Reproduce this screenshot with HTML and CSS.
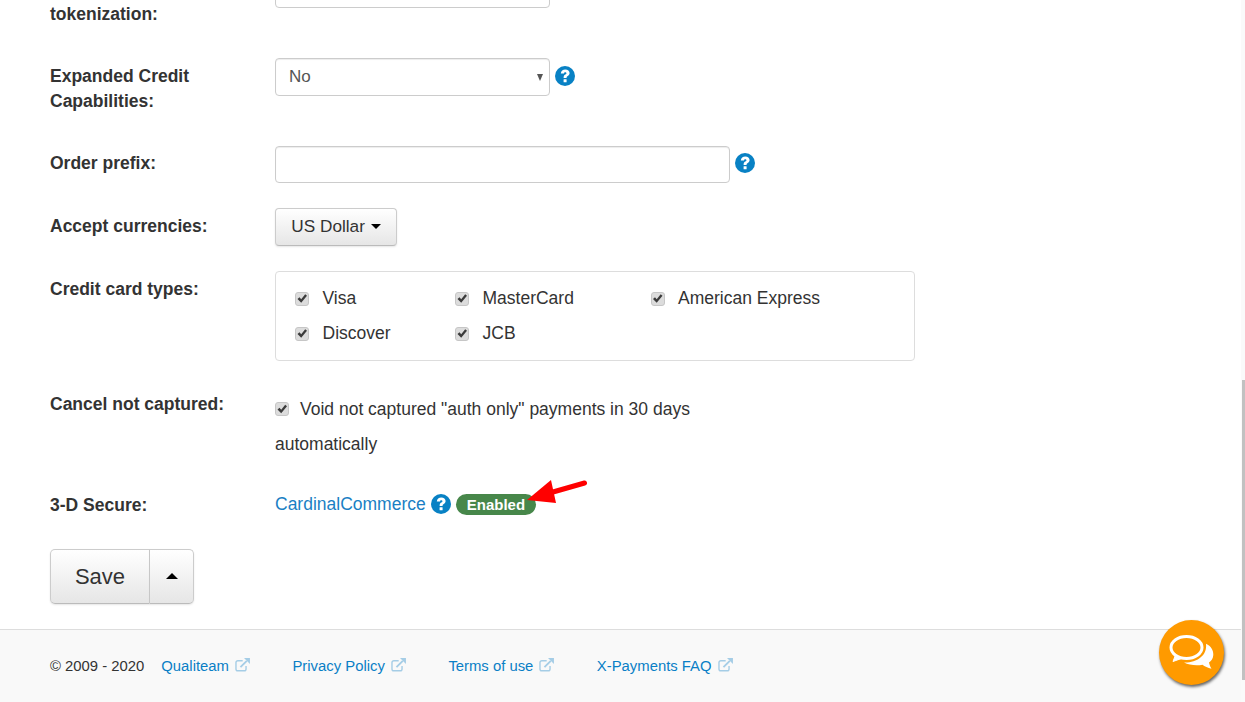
FILE: index.html
```html
<!DOCTYPE html>
<html lang="en">
<head>
<meta charset="utf-8">
<title>X-Payments settings</title>
<link rel="stylesheet" href="styles.css">
</head>
<body>
<svg class="sprite" width="0" height="0" aria-hidden="true">
  <symbol id="help" viewBox="0 0 20 20">
    <circle cx="10" cy="10" r="10" fill="#0881c4"/>
    <path d="M5.800 7.500C6 4.900 7.800 3.400 10.300 3.400c2.500 0 4.300 1.500 4.300 3.600 0 1.500-.8 2.400-1.900 3.100-.9.6-1.100.9-1.100 1.800H8.600c0-1.700.5-2.500 1.700-3.300.8-.5 1.100-.8 1.100-1.400 0-.6-.5-1-1.100-1-.8 0-1.200.5-1.300 1.400z" fill="#fff"/>
    <rect x="8.600" y="13.200" width="3" height="3" rx=".3" fill="#fff"/>
  </symbol>
  <symbol id="ext" viewBox="0 0 16 15">
    <path d="M11.800 8.600v3.100a2 2 0 0 1-2 2H3a2 2 0 0 1-2-2V4.900a2 2 0 0 1 2-2h5.200" fill="none" stroke="currentColor" stroke-width="1.500"/>
    <path d="M5.800 9.800 12.600 3" fill="none" stroke="currentColor" stroke-width="2"/>
    <path d="M9.600 0H16v6.400z" fill="currentColor"/>
  </symbol>
</svg>

<div class="page">
  <main class="form">
    <div class="row row-first">
      <div class="label label-tail">tokenization:</div>
      <div class="field"><span class="select-wrap"><select class="select" aria-label="Tokenization"><option>No</option></select></span></div>
    </div>

    <div class="row row-select">
      <div class="label">Expanded Credit<br>Capabilities:</div>
      <div class="field">
        <span class="select-wrap"><select class="select"><option>No</option></select></span>
        <svg class="help"><use href="#help"/></svg>
      </div>
    </div>

    <div class="row row-prefix">
      <div class="label">Order prefix:</div>
      <div class="field">
        <input class="text-input" type="text">
        <svg class="help"><use href="#help"/></svg>
      </div>
    </div>

    <div class="row row-currency">
      <div class="label">Accept currencies:</div>
      <div class="field">
        <button class="btn btn-currency" type="button">US Dollar <span class="caret"></span></button>
      </div>
    </div>

    <div class="row row-cards">
      <div class="label">Credit card types:</div>
      <div class="card-box">
        <label class="check check-a"><input type="checkbox" checked>Visa</label>
        <label class="check check-b"><input type="checkbox" checked>MasterCard</label>
        <label class="check"><input type="checkbox" checked>American Express</label>
        <label class="check check-a"><input type="checkbox" checked>Discover</label>
        <label class="check check-b"><input type="checkbox" checked>JCB</label>
      </div>
    </div>

    <div class="row row-cancel">
      <div class="label">Cancel not captured:</div>
      <label class="void"><input type="checkbox" checked>Void not captured "auth only" payments in 30 days automatically</label>
    </div>

    <div class="row row-secure">
      <div class="label">3-D Secure:</div>
      <div class="field field-secure">
        <a class="link" href="#">CardinalCommerce</a>
        <svg class="help"><use href="#help"/></svg>
        <span class="badge">Enabled</span>
        <svg class="arrow" viewBox="0 0 62 30" aria-hidden="true">
          <path d="M59.500 4 28 13" fill="none" stroke="#f00" stroke-width="5" stroke-linecap="round"/>
          <path d="M2 21 26 1l5 23z" fill="#f00"/>
        </svg>
      </div>
    </div>

    <div class="save-group">
      <button class="btn btn-save" type="button">Save</button>
      <button class="btn btn-more" type="button" aria-label="More"><span class="caret caret-up"></span></button>
    </div>
  </main>

  <footer class="footer">
    <span class="copy">© 2009 - 2020</span>
    <a class="foot-link" href="#">Qualiteam <svg class="ext"><use href="#ext"/></svg></a>
    <a class="foot-link" href="#">Privacy Policy <svg class="ext"><use href="#ext"/></svg></a>
    <a class="foot-link" href="#">Terms of use <svg class="ext"><use href="#ext"/></svg></a>
    <a class="foot-link" href="#">X-Payments FAQ <svg class="ext"><use href="#ext"/></svg></a>
  </footer>

  <button class="chat" type="button" aria-label="Chat">
    <svg viewBox="0 0 46 36" aria-hidden="true">
      <path d="M37 8.700C42 11 44.500 15 44.300 20C44 24 42 26 40 27.500C40.500 30 41.500 32.500 42.500 33.700C39 33 35.500 31.500 33.500 29.800C27 31 20 30 15 27.500C27 28 38.500 21 37 8.700z" fill="#fff"/>
      <ellipse cx="17.500" cy="12.500" rx="15.500" ry="11" fill="none" stroke="#fff" stroke-width="3"/>
      <path d="M6.500 20 4 26.500l8.500-3z" fill="#fff" stroke="#fff" stroke-width="1"/>
    </svg>
  </button>
  <div class="scrollbar"><div class="thumb"></div></div>
</div>
</body>
</html>
```
FILE: styles.css
```css
* { box-sizing: border-box; }
html, body { margin: 0; height: 100%; overflow: hidden; }
body {
  font-family: "Liberation Sans", Arial, sans-serif;
  font-size: 17.5px;
  line-height: 25px;
  color: #333;
  background: #fff;
}
.sprite { position: absolute; }
.page {
  height: 702px;
  display: flex;
  flex-direction: column;
  position: relative;
  overflow: hidden;
}
.form { flex: 1; padding-left: 50px; }
.row { display: flex; }
.label { width: 225px; flex: none; font-weight: bold; padding-top: 6px; }
.row-select .label { padding-top: 5.500px; }
.row-prefix .label { padding-top: 5px; }
.label-tail { padding-top: 31.500px; }
.field { display: flex; align-items: flex-start; }

.row-first { margin-top: -30px; height: 88px; }
.row-select { height: 88px; }
.row-prefix { height: 62px; }
.row-prefix .help { margin-top: 7px; }
.row-currency { height: 63px; }
.row-cards { height: 115px; }
.row-cancel { height: 99px; }
.row-secure { height: 64px; }
.row-secure .label { padding-top: 8px; }

.select-wrap { position: relative; display: block; width: 275px; height: 38px; }
.select-wrap::after {
  content: "";
  position: absolute;
  right: 7px;
  top: 16px;
  border-left: 3.500px solid transparent;
  border-right: 3.500px solid transparent;
  border-top: 7px solid #555;
}
.select {
  appearance: none;
  display: block;
  width: 275px;
  height: 38px;
  border: 1px solid #ccc;
  border-radius: 4px;
  background: #fff;
  font: 17px "Liberation Sans", Arial, sans-serif;
  color: #555;
  padding: 0 13px 2px;
  box-shadow: inset 0 1px 1px rgba(0,0,0,.075);
}
.text-input {
  width: 455px;
  height: 37px;
  border: 1px solid #ccc;
  border-radius: 4px;
  background: #fff;
  box-shadow: inset 0 1px 1px rgba(0,0,0,.075);
}
.help { width: 20px; height: 20px; margin: 8px 0 0 5px; flex: none; }

.btn {
  font-family: inherit;
  color: #333;
  border: 1px solid #ccc;
  border-bottom-color: #bbb;
  background: linear-gradient(#fff, #e6e6e6);
  box-shadow: 0 1px 2px rgba(0,0,0,.1);
  cursor: pointer;
}
.btn-currency {
  height: 38px;
  width: 122px;
  font-size: 17.200px;
  border-radius: 4px;
  padding: 0 0 2px;
}
.caret {
  display: inline-block;
  width: 0;
  height: 0;
  vertical-align: middle;
  border-left: 5px solid transparent;
  border-right: 5px solid transparent;
  border-top: 5px solid #000;
  margin-left: 1px;
}
.caret-up { border-top: 0; border-bottom: 6px solid #000; border-left-width: 6px; border-right-width: 6px; margin: 0 0 2px; }

.card-box {
  width: 640px;
  height: 90px;
  border: 1px solid #ddd;
  border-radius: 4px;
  padding: 9px 0 0 19px;
  display: flex;
  flex-wrap: wrap;
  align-content: flex-start;
}
.check { height: 35px; line-height: 35px; display: flex; align-items: center; }
.check-a { width: 160px; }
.check-b { width: 195.500px; }
input[type="checkbox"] {
  appearance: none;
  width: 14px;
  height: 14px;
  margin: 0 13.500px 0 0;
  border-radius: 3px;
  border: 1px solid #c6c6c6;
  background: #dcdcdc;
  position: relative;
  flex: none;
}
input[type="checkbox"]::after {
  content: "";
  position: absolute;
  inset: 1px;
  background: #3b3b3b;
  clip-path: polygon(5% 55%, 25% 38%, 42% 58%, 82% 8%, 100% 22%, 42% 92%);
}
.void { display: block; width: 440px; line-height: 35px; margin-top: 6px; height: 70px; }
.void input { margin: 0 11px 0 0; vertical-align: -1px; }

.field-secure { position: relative; align-items: center; height: 38px; align-self: flex-start; }
.link { color: #1a7fc4; text-decoration: none; }
.field-secure .help { margin: 0 0 0 5px; }
.badge {
  margin-left: 5px;
  background: #47874a;
  color: #fff;
  font-weight: bold;
  font-size: 15px;
  line-height: 21px;
  height: 21px;
  padding: 0 11px;
  border-radius: 11px;
}
.arrow { position: absolute; left: 250px; top: -6px; width: 62px; height: 30px; }

.save-group { display: flex; }
.btn-save {
  width: 100px;
  height: 55px;
  font-size: 22px;
  border-radius: 5px 0 0 5px;
  border-right: 1px solid #ccc;
}
.btn-more {
  width: 44px;
  height: 55px;
  border-left: 0;
  border-radius: 0 5px 5px 0;
  padding: 0;
}

.footer {
  height: 73px;
  flex: none;
  border-top: 1px solid #ddd;
  background: #f9f9f9;
  padding: 24px 0 0 50px;
  font-size: 14.850px;
  line-height: 25px;
  display: flex;
}
.copy { margin-right: 17px; }
.foot-link { color: #0a7fc6; text-decoration: none; margin-right: 42.400px; white-space: nowrap; }
.ext { width: 15px; height: 14px; color: #a5cde6; margin-left: 2px; vertical-align: -1px; }

.chat {
  position: absolute;
  left: 1159px;
  top: 620px;
  width: 65px;
  height: 65px;
  padding: 0;
  border: 0;
  border-radius: 50%;
  background: #ff9a00;
  box-shadow: 1px 2px 3px rgba(0,0,0,.6);
  display: flex;
  align-items: center;
  justify-content: center;
}
.chat svg { display: block; width: 46px; height: 36px; }
.scrollbar { position: absolute; right: 0; top: 0; bottom: 0; width: 4px; background: #fafafa; }
.thumb { position: absolute; left: 1px; right: 0; top: 380px; height: 300px; background: #c1c1c1; }
```
